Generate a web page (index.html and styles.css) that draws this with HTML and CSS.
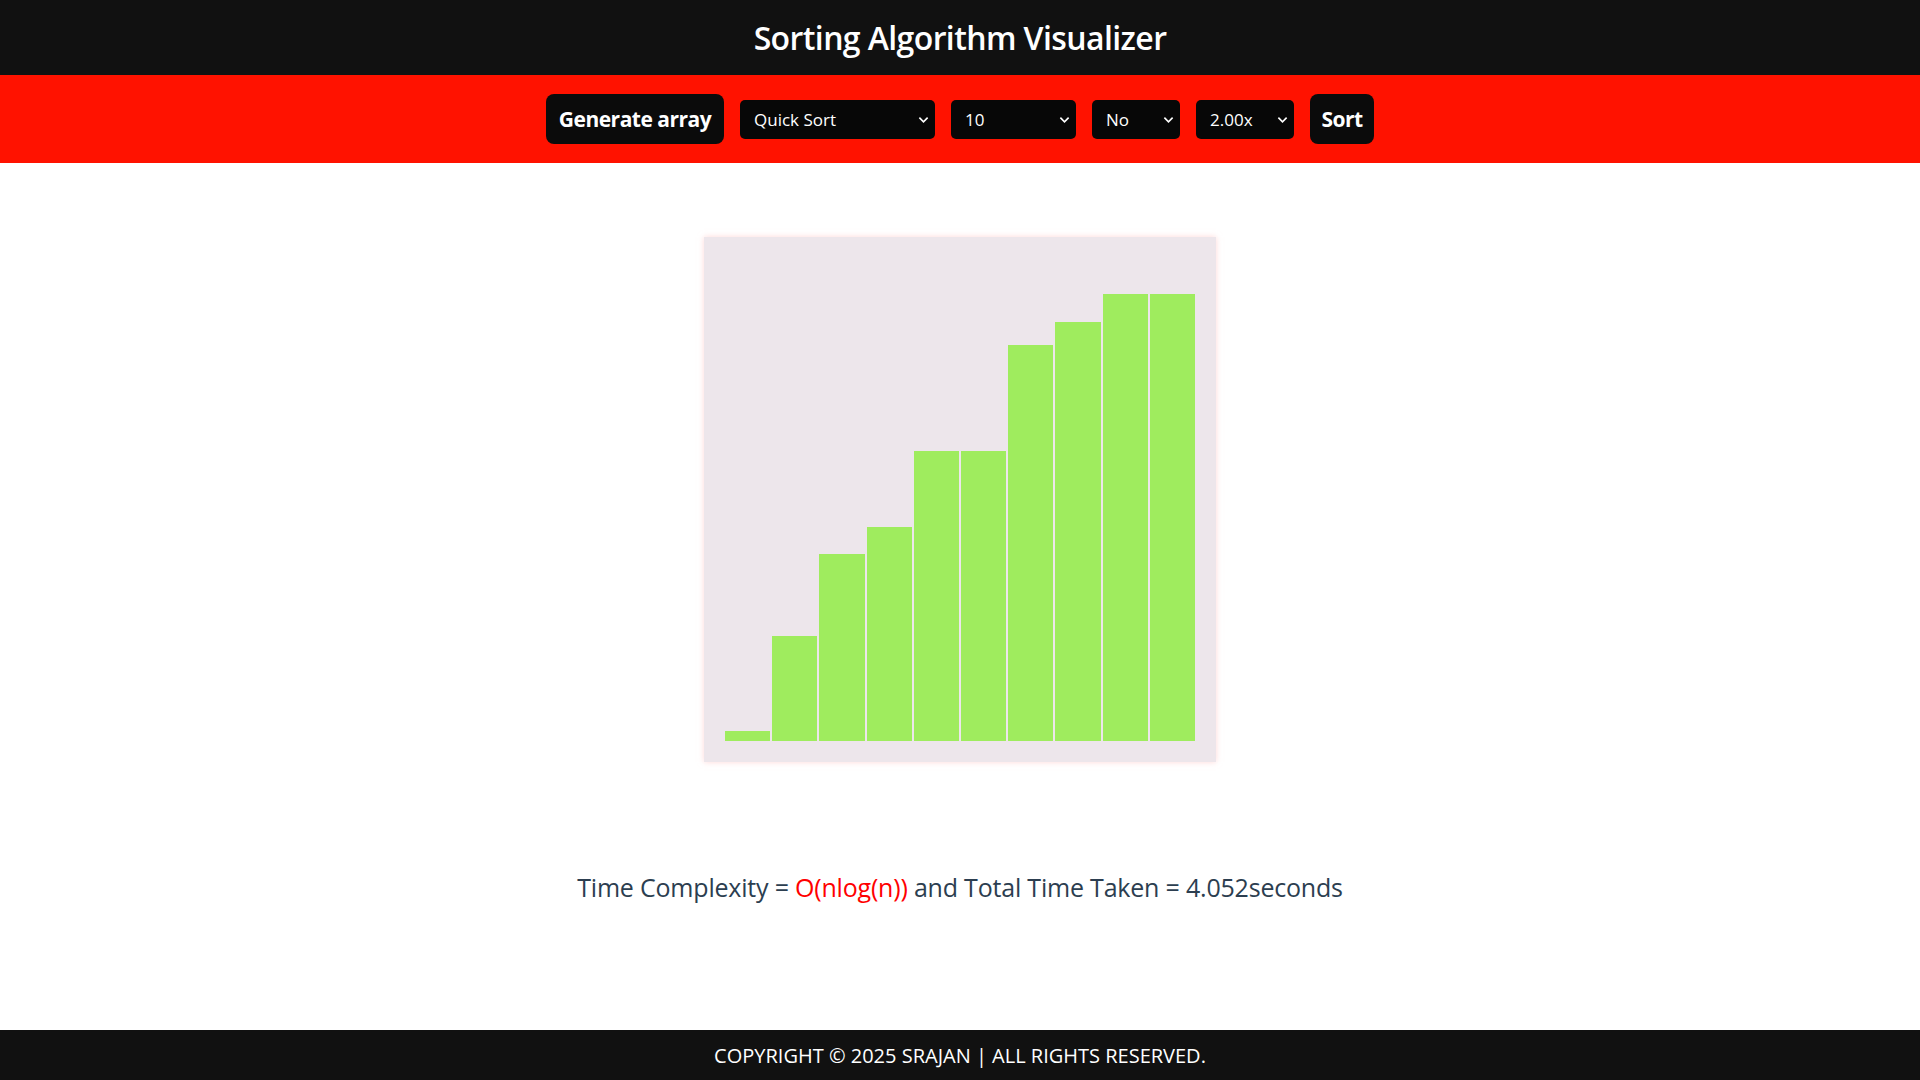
FILE: index.html
```html
<!DOCTYPE html>
<html lang="en">
<head>
<meta charset="utf-8">
<title>Sorting Algorithm Visualizer</title>
<link rel="stylesheet" href="styles.css">
</head>
<body>
<header class="top">
  <h1 class="title">Sorting Algorithm Visualizer</h1>
</header>
<nav class="controls">
  <button class="btn btn-gen">Generate array</button>
  <div class="sel sel-algo">
    <select><option>Quick Sort</option></select>
    <svg class="chev" viewBox="0 0 12 8" width="11" height="8"><path d="M1.5 1.5 L6 6 L10.5 1.5" fill="none" stroke="#fff" stroke-width="1.8"/></svg>
  </div>
  <div class="sel sel-size">
    <select><option>10</option></select>
    <svg class="chev" viewBox="0 0 12 8" width="11" height="8"><path d="M1.5 1.5 L6 6 L10.5 1.5" fill="none" stroke="#fff" stroke-width="1.8"/></svg>
  </div>
  <div class="sel sel-no">
    <select><option>No</option></select>
    <svg class="chev" viewBox="0 0 12 8" width="11" height="8"><path d="M1.5 1.5 L6 6 L10.5 1.5" fill="none" stroke="#fff" stroke-width="1.8"/></svg>
  </div>
  <div class="sel sel-speed">
    <select><option>2.00x</option></select>
    <svg class="chev" viewBox="0 0 12 8" width="11" height="8"><path d="M1.5 1.5 L6 6 L10.5 1.5" fill="none" stroke="#fff" stroke-width="1.8"/></svg>
  </div>
  <button class="btn btn-sort">Sort</button>
</nav>
<main class="main">
  <div class="chart">
    <div class="bar" style="height:10px"></div>
    <div class="bar" style="height:105px"></div>
    <div class="bar" style="height:187px"></div>
    <div class="bar" style="height:214px"></div>
    <div class="bar" style="height:290px"></div>
    <div class="bar" style="height:290px"></div>
    <div class="bar" style="height:396px"></div>
    <div class="bar" style="height:419px"></div>
    <div class="bar" style="height:447px"></div>
    <div class="bar" style="height:447px"></div>
  </div>
  <p class="complexity">Time Complexity = <span class="red">O(nlog(n))</span> and Total Time Taken = 4.052seconds</p>
</main>
<footer class="foot">COPYRIGHT © 2025 SRAJAN | ALL RIGHTS RESERVED.</footer>
</body>
</html>
```
FILE: styles.css
```css
* { box-sizing: border-box; }
html, body { margin: 0; padding: 0; }
body {
  font-family: "Open Sans", "Noto Sans", sans-serif;
  min-height: 100vh;
  display: flex;
  flex-direction: column;
  background: #fff;
}
.top {
  height: 75px;
  background: #111111;
  display: flex;
  align-items: center;
  justify-content: center;
}
.title {
  margin: 0;
  color: #fff;
  font-size: 32px;
  font-weight: 600;
  letter-spacing: -0.6px;
}
.controls {
  height: 88px;
  background: #ff1200;
  display: flex;
  align-items: center;
  justify-content: center;
  gap: 16px;
}
.btn {
  height: 50px;
  border: none;
  border-radius: 8px;
  background: #0b0b0b;
  color: #fff;
  font-family: inherit;
  font-weight: 700;
  font-size: 21px;
  letter-spacing: -0.5px;
  padding: 0;
  cursor: pointer;
}
.btn-gen { width: 178px; }
.btn-sort { width: 64px; }
.sel {
  position: relative;
  height: 39px;
}
.sel select {
  appearance: none;
  -webkit-appearance: none;
  width: 100%;
  height: 100%;
  border: none;
  border-radius: 5px;
  background: #070707;
  color: #fff;
  font-family: inherit;
  font-size: 17px;
  padding: 0 28px 0 14px;
  outline: none;
}
.chev {
  position: absolute;
  right: 6px;
  top: 16px;
  pointer-events: none;
}
.sel-algo { width: 195px; }
.sel-size { width: 125px; }
.sel-no { width: 88px; }
.sel-speed { width: 98px; }
.main {
  flex: 1;
  display: flex;
  flex-direction: column;
  align-items: center;
  padding-top: 74px;
}
.chart {
  width: 512px;
  height: 525px;
  background: #ede6eb;
  box-shadow: 0 0 6px rgba(255, 190, 190, 0.6);
  padding: 0 21px 21px 21px;
  display: flex;
  align-items: flex-end;
  gap: 2px;
}
.bar {
  flex: 1;
  background: #9fec5e;
}
.complexity {
  margin: 108px 0 0 0;
  font-size: 25px;
  font-weight: 500;
  color: #2c3e50;
  letter-spacing: -0.2px;
}
.red { color: #ff0000; }
.foot {
  height: 50px;
  background: #111111;
  color: #fff;
  display: flex;
  align-items: center;
  justify-content: center;
  font-size: 20px;
}
```
